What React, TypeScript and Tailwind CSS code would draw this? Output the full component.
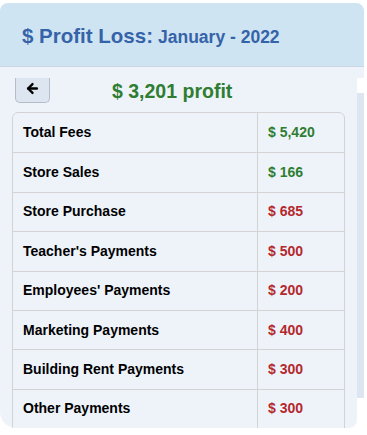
import { ArrowLeft } from 'lucide-react';

const rows = [
  { label: 'Total Fees', amount: '$ 5,420', income: true },
  { label: 'Store Sales', amount: '$ 166', income: true },
  { label: 'Store Purchase', amount: '$ 685', income: false },
  { label: "Teacher's Payments", amount: '$ 500', income: false },
  { label: "Employees' Payments", amount: '$ 200', income: false },
  { label: 'Marketing Payments', amount: '$ 400', income: false },
  { label: 'Building Rent Payments', amount: '$ 300', income: false },
  { label: 'Other Payments', amount: '$ 300', income: false },
];

export default function App() {
  return (
    <div className="w-[367px] h-[435px] bg-white pt-[3px] font-['Liberation_Sans',Arial,sans-serif]">
      <div className="w-[364px]">
        {/* header */}
        <div className="h-[64px] bg-[#cfe4f2] rounded-t-lg border-b border-[#c9d6e3] flex items-center pl-[22px] pt-[4px]">
          <span className="text-[20.5px] font-bold text-[#3563a9]">$ Profit Loss:</span>
          <span className="text-[17.5px] font-bold text-[#3563a9] ml-[5px] mt-[2px]">January - 2022</span>
        </div>

        <div className="flex">
          <div className="w-[357px] h-[361px] bg-[#eef3fa] rounded-bl-[16px] rounded-br-[8px] overflow-hidden pt-[11px] px-[12px]">
            <div className="h-[34px] flex items-start">
              <button className="ml-[3px] w-[35px] h-[25px] bg-[#dce5f0] border border-t-0 border-[#b5bdc8] rounded-b-[5px] flex items-center justify-center">
                <ArrowLeft size={15} strokeWidth={3.8} className="text-black -mt-[4px]" />
              </button>
              <span className="ml-[62px] mt-[1px] text-[19.5px] font-bold text-[#2f7d32] leading-[24px]">$ 3,201 profit</span>
            </div>

            <div className="border border-[#d3d3d3] rounded-t-[6px]">
              {rows.map((r, i) => (
                <div
                  key={r.label}
                  className={`flex h-[39.4px] ${i > 0 ? 'border-t border-[#d3d3d3]' : ''}`}
                >
                  <div className="w-[245px] border-r border-[#d3d3d3] pl-[10px] flex items-center text-[14px] font-bold text-black">
                    {r.label}
                  </div>
                  <div
                    className={`flex-1 pl-[10px] flex items-center text-[14px] font-bold ${
                      r.income ? 'text-[#2f7d32]' : 'text-[#b3292e]'
                    }`}
                  >
                    {r.amount}
                  </div>
                </div>
              ))}
            </div>
          </div>

          {/* scroll strip */}
          <div className="w-[7px] flex flex-col">
            <div className="h-[11px] bg-[#eef3fa]" />
            <div className="h-[15px] bg-white" />
            <div className="h-[305px] bg-[#dce5f0]" />
          </div>
        </div>
      </div>
    </div>
  );
}
